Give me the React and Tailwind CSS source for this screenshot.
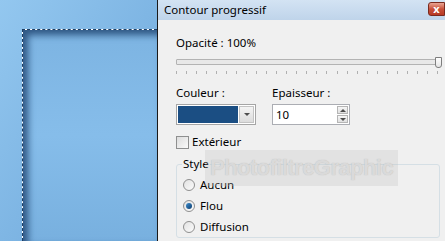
import React from 'react';

const ticks = Array.from({ length: 27 });

const Radio = ({ checked, label }) => (
  <div className="flex items-center h-[21px]">
    <span className="w-[12px] h-[12px] rounded-full border border-[#8f8f8f] bg-gradient-to-br from-[#e2e2e2] to-[#fbfbfb] flex items-center justify-center shrink-0">
      {checked && <span className="w-[6px] h-[6px] rounded-full bg-gradient-to-br from-[#3f8fcf] to-[#0c3d6e]" />}
    </span>
    <span className="ml-[5px] text-black">{label}</span>
  </div>
);

export default function App() {
  return (
    <div className="w-[445px] h-[241px] overflow-hidden flex font-['Noto_Sans',sans-serif] text-[11.5px] leading-[16px]">
      {/* canvas */}
      <div className="w-[157px] shrink-0 h-full bg-gradient-to-br from-[#93c7ef] via-[#7fb6e4] to-[#6ea5d8] pl-[22px] pt-[29px]">
        <div className="h-full border-t border-l border-dashed border-[#1c3d63] bg-white">
          <div className="h-full bg-gradient-to-b from-[#7db4e2] via-[#86bdea] to-[#78b0df] shadow-[inset_5px_5px_7px_rgba(20,55,100,0.75)]" />
        </div>
      </div>
      <div className="w-px shrink-0 bg-[#1a1a1a]" />

      {/* dialog */}
      <div className="relative flex-1 flex flex-col bg-[#f0f0f0]">
        <div className="h-[20px] shrink-0 flex items-center justify-between bg-gradient-to-b from-[#d3e3f3] to-[#bfd4ea] pl-[6px]">
          <span className="text-black">Contour progressif</span>
          <div className="mb-[3px] w-[17px] h-[14px] rounded-l-[3px] border border-[#7a2a1e] bg-gradient-to-b from-[#e8a493] via-[#c8503a] to-[#b83a24] flex items-center justify-center text-white text-[11px] font-bold leading-none">
            x
          </div>
        </div>

        <div className="pl-[18px] pr-[3px] flex flex-col">
          <div className="mt-[15px]">Opacité : 100%</div>

          <div className="mt-[6px] relative w-[263px] h-[14px]">
            <div className="mt-[2px] h-[6px] w-[261px] border border-[#b3b3b3] bg-[#e8e8e8] rounded-[1px]" />
            <div className="absolute left-[259px] top-0 w-[7px] h-[11px] rounded-b-[3px] border border-[#7e7e7e] bg-gradient-to-b from-white to-[#e4e4e4]" />
          </div>
          <div className="flex justify-between w-[262px] h-[4px]">
            {ticks.map((_, i) => (
              <span key={i} className="w-px h-[3px] bg-[#b0b0b0]" />
            ))}
          </div>

          <div className="mt-[10px] flex gap-[16px]">
            <div className="flex flex-col">
              <span>Couleur :</span>
              <div className="mt-[3px] w-[80px] h-[21px] border border-[#a5a5a5] bg-white p-px flex gap-px">
                <div className="flex-1 bg-[#1b4e83]" />
                <div className="w-[15px] border border-[#c3c3c3] bg-gradient-to-b from-[#f4f4f4] to-[#dcdcdc] flex items-center justify-center">
                  <span className="w-0 h-0 border-l-[3px] border-r-[3px] border-t-[3px] border-l-transparent border-r-transparent border-t-[#4d4d4d]" />
                </div>
              </div>
            </div>
            <div className="flex flex-col">
              <span>Epaisseur :</span>
              <div className="mt-[3px] w-[78px] h-[21px] border border-[#abadb3] bg-white flex items-center pl-[3px] pr-px">
                <span className="flex-1">10</span>
                <div className="flex flex-col gap-px">
                  <div className="w-[11px] h-[8px] border border-[#b5b5b5] bg-gradient-to-b from-[#f6f6f6] to-[#e0e0e0] flex items-center justify-center">
                    <span className="w-0 h-0 border-l-[3px] border-r-[3px] border-b-[3px] border-l-transparent border-r-transparent border-b-[#4d4d4d]" />
                  </div>
                  <div className="w-[11px] h-[8px] border border-[#b5b5b5] bg-gradient-to-b from-[#f6f6f6] to-[#e0e0e0] flex items-center justify-center">
                    <span className="w-0 h-0 border-l-[3px] border-r-[3px] border-t-[3px] border-l-transparent border-r-transparent border-t-[#4d4d4d]" />
                  </div>
                </div>
              </div>
            </div>
          </div>

          <div className="mt-[9px] flex items-center">
            <span className="w-[13px] h-[13px] border border-[#8e8f8f] bg-gradient-to-br from-[#dcdcdc] to-[#fafafa]" />
            <span className="ml-[3px]">Extérieur</span>
          </div>

          <div className="mt-[14px] w-[264px] h-[74px] border border-[#d5dfe5] rounded-[3px] relative pl-[6px] pt-[9px]">
            <span className="absolute left-[5px] top-[-9px] bg-[#f0f0f0] px-[1px]">Style</span>
            <Radio label="Aucun" />
            <Radio checked label="Flou" />
            <Radio label="Diffusion" />
          </div>
        </div>

        {/* watermark */}
        <div className="absolute left-[47px] top-[150px] w-[193px] h-[36px] bg-[rgba(190,190,190,0.28)] flex items-center justify-center">
          <span className="text-[22px] font-bold text-[rgba(225,225,225,0.85)] font-['Liberation_Sans',sans-serif] tracking-tight [text-shadow:0_0_1px_rgba(150,150,150,0.6)]">PhotofiltreGraphic</span>
        </div>
      </div>
    </div>
  );
}
